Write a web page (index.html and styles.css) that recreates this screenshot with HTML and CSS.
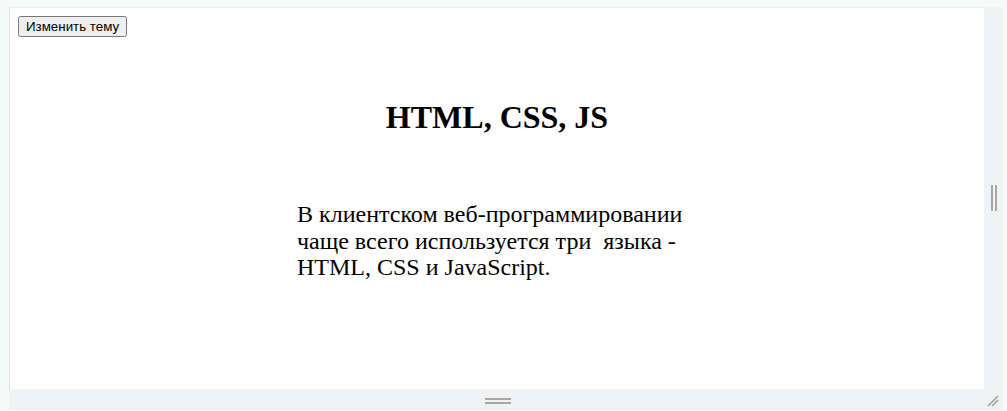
FILE: index.html
```html
<!DOCTYPE html>
<html lang="ru">
<head>
<meta charset="utf-8">
<title>HTML, CSS, JS</title>
<link rel="stylesheet" href="styles.css">
</head>
<body>
<div class="page">
  <div class="pane">
    <div class="row">
      <div class="frame">
        <div class="toolbar"><button class="theme-btn" type="button">Изменить тему</button></div>
        <h1 class="title">HTML, CSS, JS</h1>
        <p class="text">В клиентском веб-программировании чаще всего используется три &nbsp;языка - HTML, CSS и JavaScript.</p>
      </div>
      <div class="vgutter"><span class="vbar"></span><span class="vbar"></span></div>
    </div>
    <div class="hgutter"><div class="hhandle"><span class="hbar"></span><span class="hbar"></span></div></div>
    <svg class="grip" width="14" height="14" viewBox="0 0 14 14">
      <line x1="2" y1="13" x2="12" y2="3" stroke="#9a9a9a" stroke-width="1.4"/>
      <line x1="6" y1="13" x2="12" y2="7" stroke="#9a9a9a" stroke-width="1.4"/>
    </svg>
  </div>
</div>
</body>
</html>
```
FILE: styles.css
```css
html, body {
  margin: 0;
  padding: 0;
  background: #f8f9f9;
}
.page {
  width: 1007px;
  height: 411px;
  box-sizing: border-box;
  padding: 7px 4px 1px 9px;
}
.pane {
  position: relative;
  display: flex;
  flex-direction: column;
  width: 994px;
  height: 403px;
  background: #f1f2f3;
}
.row {
  display: flex;
  height: 382px;
}
.frame {
  width: 975px;
  height: 382px;
  box-sizing: border-box;
  background: #ffffff;
  border-left: 1px solid #dcdee0;
  border-top: 1px solid #eceded;
  padding: 8px;
  font-family: "Liberation Serif", "Times New Roman", serif;
  color: #000;
  overflow: hidden;
}
.toolbar {
  display: flex;
  height: 21px;
}
.theme-btn {
  font-family: "Liberation Sans", Arial, sans-serif;
  font-size: 13.333px;
  height: 21px;
  margin: 0;
}
.title {
  font-size: 32px;
  font-weight: bold;
  line-height: 37px;
  text-align: center;
  margin: 62px 0 65px;
}
.text {
  width: 400px;
  margin: 0 auto;
  font-size: 24px;
  line-height: 26.7px;
}
.vgutter {
  flex: 1;
  display: flex;
  align-items: center;
  justify-content: center;
  gap: 2px;
  padding-left: 1px;
}
.vbar {
  width: 2px;
  height: 26px;
  background: #a6a6a6;
}
.hgutter {
  width: 975px;
  flex: 1;
  display: flex;
  justify-content: center;
  align-items: center;
  padding-top: 2px;
  box-sizing: border-box;
}
.hhandle {
  display: flex;
  flex-direction: column;
  gap: 2px;
  margin-left: 2px;
}
.hbar {
  width: 26px;
  height: 2px;
  background: #a6a6a6;
}
.grip {
  position: absolute;
  right: 3px;
  bottom: 3px;
}
```
